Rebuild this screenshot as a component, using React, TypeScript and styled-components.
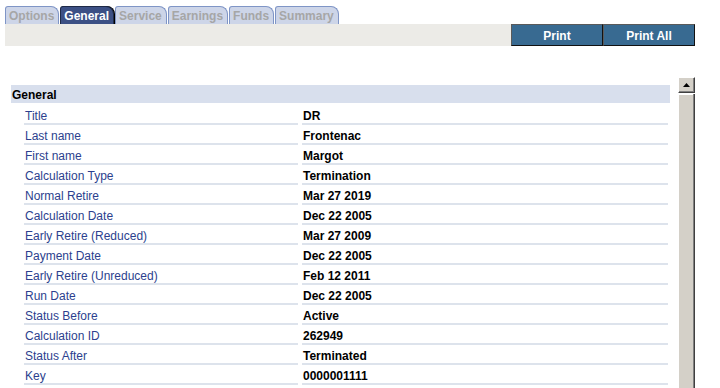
import React from "react";
import styled, { createGlobalStyle } from "styled-components";

type Row = { label: string; value: string };

const tabs = ["Options", "General", "Service", "Earnings", "Funds", "Summary"];

const rows: Row[] = [
  { label: "Title", value: "DR" },
  { label: "Last name", value: "Frontenac" },
  { label: "First name", value: "Margot" },
  { label: "Calculation Type", value: "Termination" },
  { label: "Normal Retire", value: "Mar 27 2019" },
  { label: "Calculation Date", value: "Dec 22 2005" },
  { label: "Early Retire (Reduced)", value: "Mar 27 2009" },
  { label: "Payment Date", value: "Dec 22 2005" },
  { label: "Early Retire (Unreduced)", value: "Feb 12 2011" },
  { label: "Run Date", value: "Dec 22 2005" },
  { label: "Status Before", value: "Active" },
  { label: "Calculation ID", value: "262949" },
  { label: "Status After", value: "Terminated" },
  { label: "Key", value: "0000001111" },
];

const Global = createGlobalStyle`
  html, body {
    margin: 0;
    padding: 0;
    background: #fff;
    overflow: hidden;
  }
  body {
    font-family: "Liberation Sans", Arial, sans-serif;
    font-size: 12px;
  }
`;

const Page = styled.div`
  width: 720px;
  height: 388px;
  padding: 5px 25px 0 5px;
  box-sizing: border-box;
`;

const TabStrip = styled.div`
  display: flex;
  align-items: flex-end;
  height: 19px;
  gap: 1px;
`;

const Tab = styled.div<{ $active?: boolean }>`
  height: 18px;
  box-sizing: border-box;
  padding: 2px 4px 0 3px;
  border: 1px solid ${(p) => (p.$active ? "#1e2a48" : "#7f95c6")};
  border-bottom: none;
  border-radius: 3px 8px 0 0;
  background: ${(p) => (p.$active ? "#3c5085" : "#cdd5e8")};
  color: ${(p) => (p.$active ? "#ffffff" : "#a6a6a6")};
  font-weight: bold;
  font-size: 12px;
  line-height: 14px;
  white-space: nowrap;
  box-shadow: ${(p) => (p.$active ? "1px 0 0 #000" : "none")};
`;

const Toolbar = styled.div`
  display: flex;
  justify-content: flex-end;
  height: 22px;
  background: #ecebe7;
`;

const PrintButton = styled.button`
  width: 92px;
  height: 22px;
  box-sizing: border-box;
  margin: 0;
  padding: 2px 0 0;
  background: #386a91;
  color: #fff;
  font-family: "Liberation Sans", Arial, sans-serif;
  font-weight: bold;
  font-size: 12px;
  border: 1px solid #5a5a5a;
  border-right-color: #111;
  border-bottom-color: #111;
  cursor: pointer;
`;

const Panel = styled.div`
  display: flex;
  margin-top: 31px;
  height: 311px;
`;

const Content = styled.div`
  flex: 1;
  padding: 8px 0 0 6px;
`;

const SectionHeader = styled.div`
  width: 659px;
  height: 18px;
  box-sizing: border-box;
  padding: 3px 0 0 1px;
  background: #d8dfed;
  font-weight: bold;
  color: #000;
  line-height: 14px;
`;

const Table = styled.div`
  display: grid;
  grid-template-columns: 274px 366px;
  column-gap: 4px;
  margin: 2px 0 0 13px;
`;

const Cell = styled.div<{ $value?: boolean }>`
  height: 20px;
  box-sizing: border-box;
  padding: 5px 0 0 1px;
  border-bottom: 2px solid #dde3ec;
  line-height: 13px;
  color: ${(p) => (p.$value ? "#000" : "#2c3f8e")};
  font-weight: ${(p) => (p.$value ? "bold" : "normal")};
  white-space: nowrap;
`;

const Scrollbar = styled.div`
  width: 17px;
  display: flex;
  flex-direction: column;
`;

const ArrowButton = styled.div`
  height: 16px;
  box-sizing: border-box;
  background: #d4d0c8;
  border-top: 1px solid #fff;
  border-left: 1px solid #fff;
  border-right: 1px solid #404040;
  border-bottom: 1px solid #404040;
  box-shadow: inset -1px -1px 0 #808080;
  display: flex;
  align-items: center;
  justify-content: center;
`;

const Track = styled.div`
  flex: 1;
  background: #d4d0c8;
  border-left: 1px solid #fff;
  border-right: 1px solid #404040;
  box-shadow: inset -1px 0 0 #808080, inset 0 1px 0 #fff;
  margin-top: 1px;
`;

export default function App() {
  return (
    <Page>
      <Global />
      <TabStrip>
        {tabs.map((t) => (
          <Tab key={t} $active={t === "General"}>
            {t}
          </Tab>
        ))}
      </TabStrip>
      <Toolbar>
        <PrintButton>Print</PrintButton>
        <PrintButton>Print All</PrintButton>
      </Toolbar>
      <Panel>
        <Content>
          <SectionHeader>General</SectionHeader>
          <Table>
            {rows.map((r) => (
              <React.Fragment key={r.label}>
                <Cell>{r.label}</Cell>
                <Cell $value>{r.value}</Cell>
              </React.Fragment>
            ))}
          </Table>
        </Content>
        <Scrollbar>
          <ArrowButton>
            <svg width="7" height="4" viewBox="0 0 7 4">
              <polygon points="3.5,0 7,4 0,4" fill="#000" />
            </svg>
          </ArrowButton>
          <Track />
        </Scrollbar>
      </Panel>
    </Page>
  );
}
